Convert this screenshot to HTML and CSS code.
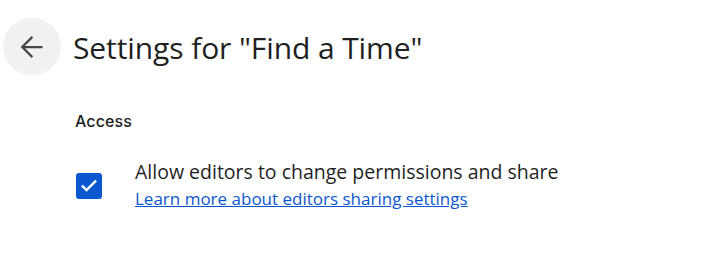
FILE: index.html
```html
<!DOCTYPE html>
<html>
<head>
<meta charset="utf-8">
<link rel="stylesheet" href="styles.css">
</head>
<body>
<div class="page">
  <header class="header">
    <button class="back" aria-label="Back">
      <svg width="30" height="30" viewBox="0 0 24 24"><path d="M20.4 12H4.2M12.3 3.9L4.2 12l8.1 8.1" fill="none" stroke="#444746" stroke-width="1.8"/></svg>
    </button>
    <h1 class="title">Settings for "Find a Time"</h1>
  </header>
  <section class="section">
    <h2 class="section-title">Access</h2>
    <div class="option">
      <span class="checkbox">
        <svg width="20" height="20" viewBox="0 0 24 24"><path d="M4.5 12.5l4.5 4.5L19.5 6.5" fill="none" stroke="#fff" stroke-width="2.8" stroke-linecap="square"/></svg>
      </span>
      <div class="option-text">
        <div class="option-label">Allow editors to change permissions and share</div>
        <a class="option-link" href="#">Learn more about editors sharing settings</a>
      </div>
    </div>
  </section>
</div>
</body>
</html>
```
FILE: styles.css
```css
html, body { margin: 0; padding: 0; background: #fff; }
body { font-family: "Open Sans", Roboto, sans-serif; color: #1f1f1f; }
.page { padding: 18px 0 0 3px; }
.header { display: flex; align-items: center; gap: 12px; }
.back {
  width: 58px; height: 57px; border-radius: 50%; border: none;
  background: #f1f1f1; display: flex; align-items: center; justify-content: center;
  padding: 0; margin: 0;
}
.title { font-size: 30px; line-height: 40px; font-weight: 400; margin: 3px 0 0 0; letter-spacing: -0.1px; color: #1f1f1f; }
.section { padding-left: 72px; margin-top: 36px; }
.section-title { font-family: Inter, "Open Sans", sans-serif; font-size: 16px; line-height: 20px; font-weight: 500; margin: 0; color: #1f1f1f; letter-spacing: 0.1px; }
.option { display: flex; align-items: center; gap: 33px; margin-top: 28px; }
.checkbox {
  width: 26px; height: 26px; border-radius: 3px; background: #0b57d0;
  display: flex; align-items: center; justify-content: center; margin-left: 1px;
}
.option-text { display: flex; flex-direction: column; }
.option-label { font-size: 19.5px; line-height: 26px; }
.option-link { font-size: 17px; line-height: 28px; color: #0b57d0; text-decoration: underline; }
```
